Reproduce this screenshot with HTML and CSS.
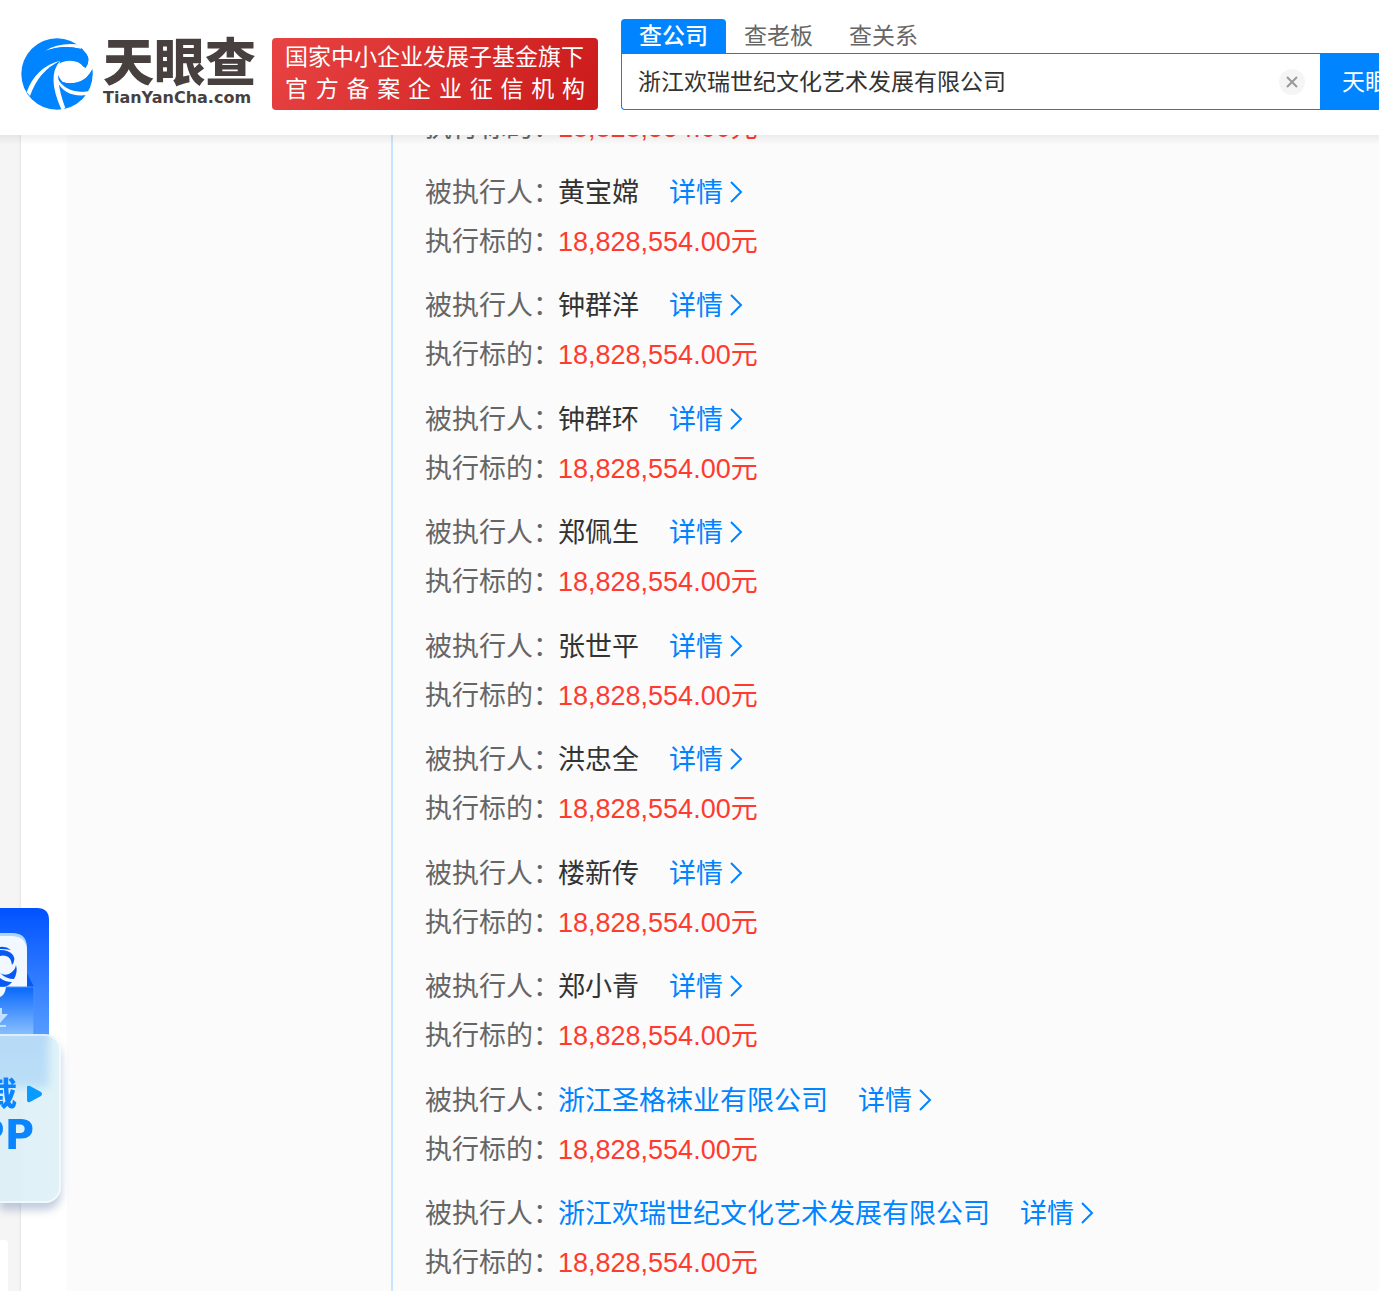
FILE: index.html
```html
<!DOCTYPE html>
<html lang="zh-CN">
<head>
<meta charset="utf-8">
<title>浙江欢瑞世纪文化艺术发展有限公司 - 天眼查</title>
<link rel="stylesheet" href="styles.css">
</head>
<body>
<header class="header">
  <a class="logo" href="#" aria-label="天眼查">
    <svg class="logo-mark" viewBox="9 14 216 216" aria-hidden="true">
      <circle cx="117" cy="122" r="107" fill="#0084ff"/>
      <g fill="#fff">
        <path d="M81 53Q120 28 176 33L196 40L188 46Q135 34 81 53Z"/>
        <path d="M176 32Q206 48 211 72Q214 90 203 104L196 100Q184 82 156 82Q134 82 121 93L117 112Q118 128 134 146Q160 154 188 144Q210 134 223 108L240 100L232 60L200 30Z"/>
        <path d="M127 82Q62 112 36 188L26 176Q54 100 127 82Z"/>
        <path d="M127 82Q108 132 142 224L131 230Q84 128 127 82Z"/>
        <path d="M119 136Q146 182 213 174L208 185Q142 194 116 142Z"/>
      </g>
      <path d="M81 53Q134 34 184 46Q208 56 210 78Q210 92 202 102Q200 86 180 73Q150 62 118 74Q82 90 50 130L24 120L40 70Q60 52 81 53Z" fill="#0084ff"/>
      <path d="M131 146Q164 154 188 144Q210 134 223 108Q225 144 207 173Q156 180 131 146Z" fill="#0084ff"/>
    </svg>
    <span class="logo-text">
      <span class="logo-name">天眼查</span>
      <span class="logo-domain">TianYanCha.com</span>
    </span>
  </a>
  <div class="banner">
    <span>国家中小企业发展子基金旗下</span>
    <span class="banner-spread">官方备案企业征信机构</span>
  </div>
  <form class="search">
    <nav class="tabs">
      <a class="tab tab-active" href="#">查公司</a>
      <a class="tab" href="#">查老板</a>
      <a class="tab" href="#">查关系</a>
    </nav>
    <div class="search-row">
      <div class="search-box">
        <input class="search-input" type="text" aria-label="公司名称" value="浙江欢瑞世纪文化艺术发展有限公司">
        <button class="clear" type="button" aria-label="清空">
          <svg viewBox="0 0 12 12" aria-hidden="true"><path d="M1 1L11 11M11 1L1 11"/></svg>
        </button>
      </div>
      <button class="submit" type="button">天眼一下</button>
    </div>
  </form>
</header>

<main class="page">
  <div class="panel">
    <div class="side"></div>
    <div class="records">
      <dl class="entry"><div class="row"><dt>执行标的：</dt><dd class="amount">18,828,554.00元</dd></div></dl>
      <dl class="entry"><div class="row"><dt>被执行人：</dt><dd>黄宝嫦</dd><dd class="more"><a href="#">详情<svg viewBox="0 0 14 24" aria-hidden="true"><path d="M2 2L12 12L2 22"/></svg></a></dd></div><div class="row"><dt>执行标的：</dt><dd class="amount">18,828,554.00元</dd></div></dl>
      <dl class="entry"><div class="row"><dt>被执行人：</dt><dd>钟群洋</dd><dd class="more"><a href="#">详情<svg viewBox="0 0 14 24" aria-hidden="true"><path d="M2 2L12 12L2 22"/></svg></a></dd></div><div class="row"><dt>执行标的：</dt><dd class="amount">18,828,554.00元</dd></div></dl>
      <dl class="entry"><div class="row"><dt>被执行人：</dt><dd>钟群环</dd><dd class="more"><a href="#">详情<svg viewBox="0 0 14 24" aria-hidden="true"><path d="M2 2L12 12L2 22"/></svg></a></dd></div><div class="row"><dt>执行标的：</dt><dd class="amount">18,828,554.00元</dd></div></dl>
      <dl class="entry"><div class="row"><dt>被执行人：</dt><dd>郑佩生</dd><dd class="more"><a href="#">详情<svg viewBox="0 0 14 24" aria-hidden="true"><path d="M2 2L12 12L2 22"/></svg></a></dd></div><div class="row"><dt>执行标的：</dt><dd class="amount">18,828,554.00元</dd></div></dl>
      <dl class="entry"><div class="row"><dt>被执行人：</dt><dd>张世平</dd><dd class="more"><a href="#">详情<svg viewBox="0 0 14 24" aria-hidden="true"><path d="M2 2L12 12L2 22"/></svg></a></dd></div><div class="row"><dt>执行标的：</dt><dd class="amount">18,828,554.00元</dd></div></dl>
      <dl class="entry"><div class="row"><dt>被执行人：</dt><dd>洪忠全</dd><dd class="more"><a href="#">详情<svg viewBox="0 0 14 24" aria-hidden="true"><path d="M2 2L12 12L2 22"/></svg></a></dd></div><div class="row"><dt>执行标的：</dt><dd class="amount">18,828,554.00元</dd></div></dl>
      <dl class="entry"><div class="row"><dt>被执行人：</dt><dd>楼新传</dd><dd class="more"><a href="#">详情<svg viewBox="0 0 14 24" aria-hidden="true"><path d="M2 2L12 12L2 22"/></svg></a></dd></div><div class="row"><dt>执行标的：</dt><dd class="amount">18,828,554.00元</dd></div></dl>
      <dl class="entry"><div class="row"><dt>被执行人：</dt><dd>郑小青</dd><dd class="more"><a href="#">详情<svg viewBox="0 0 14 24" aria-hidden="true"><path d="M2 2L12 12L2 22"/></svg></a></dd></div><div class="row"><dt>执行标的：</dt><dd class="amount">18,828,554.00元</dd></div></dl>
      <dl class="entry"><div class="row"><dt>被执行人：</dt><dd><a href="#">浙江圣格袜业有限公司</a></dd><dd class="more"><a href="#">详情<svg viewBox="0 0 14 24" aria-hidden="true"><path d="M2 2L12 12L2 22"/></svg></a></dd></div><div class="row"><dt>执行标的：</dt><dd class="amount">18,828,554.00元</dd></div></dl>
      <dl class="entry"><div class="row"><dt>被执行人：</dt><dd><a href="#">浙江欢瑞世纪文化艺术发展有限公司</a></dd><dd class="more"><a href="#">详情<svg viewBox="0 0 14 24" aria-hidden="true"><path d="M2 2L12 12L2 22"/></svg></a></dd></div><div class="row"><dt>执行标的：</dt><dd class="amount">18,828,554.00元</dd></div></dl>
    </div>
  </div>
</main>

<aside class="float">
  <a class="app" href="#">
    <svg class="app-art" viewBox="0 0 49 180" aria-hidden="true">
      <defs>
        <linearGradient id="card" x1="0" y1="0" x2="0" y2="1"><stop offset="0" stop-color="#0052ff"/><stop offset="0.700" stop-color="#559cff"/><stop offset="1" stop-color="#70b4ff"/></linearGradient>
        <linearGradient id="box" x1="0" y1="0" x2="0" y2="1"><stop offset="0" stop-color="#0868fb"/><stop offset="1" stop-color="#8dc2ff"/></linearGradient>
      </defs>
      <path d="M0 0H37Q49 0 49 12V180H0Z" fill="url(#card)"/>
      <path d="M27 65L34 79V80H27Z" fill="#0759ee"/>
      <path d="M0 25H12Q27 25 27 40V79H0Z" fill="#a9d7ff"/>
      <path d="M0 28H12Q27 29 27 43V79H0Z" fill="#f1f8ff"/>
      <path d="M0 39Q6 38 11 42Q5 41 0 41Z" fill="#0759f6"/>
      <path d="M0 42Q9 42 13 47Q16 52 12 57Q11 49 6 48Q3 47 0 48Z" fill="#0759f6"/>
      <path d="M0 65Q4 68 9 66Q15 63 16 57Q18 64 14 71Q6 71 0 65Z" fill="#0759f6"/>
      <path d="M0 70Q5 74 12 74Q9 78 4 79H0Z" fill="#0759f6"/>
      <path d="M0 79H34V128H0Z" fill="url(#box)"/>
      <path d="M0 79H34V128" fill="none" stroke="#4a91ff"/>
      <path d="M0 79H6Q5 87 0 89Z" fill="#f1f8ff"/>
      <path d="M0 100H2V106H8L0 115ZM0 117H6V119H0Z" fill="#c4e0ff"/>
    </svg>
    <span class="app-label">
      <span class="app-line">下载<svg class="play" viewBox="0 0 16 18" aria-hidden="true"><path d="M0 2Q0 0 3 1L14 7Q16 9 14 11L3 17Q0 18 0 15Z"/></svg></span>
      <span class="app-name">APP</span>
    </span>
  </a>
  <div class="tools"></div>
</aside>
</body>
</html>
```
FILE: styles.css
```css
* { box-sizing: border-box; }

body {
  margin: 0;
  overflow-x: hidden;
  background: #f5f5f5;
  color: #333;
  font-family: "Liberation Sans", "Noto Sans CJK SC", sans-serif;
}

a { color: #0084ff; text-decoration: none; }
button, input { font: inherit; border: 0; padding: 0; }

/* Header */
.header {
  position: fixed;
  z-index: 2;
  top: 0;
  left: 0;
  right: 0;
  display: flex;
  align-items: flex-end;
  height: 135px;
  padding: 0 0 25px 21px;
  overflow: hidden;
  background: #fff;
}
.page::before {
  content: "";
  position: fixed;
  z-index: 1;
  top: 135px;
  left: 0;
  right: 0;
  height: 10px;
  background: linear-gradient(rgba(0, 0, 0, 0.06), rgba(0, 0, 0, 0));
}

.logo { display: flex; align-items: center; gap: 10px; width: 235px; height: 72px; }
.logo-mark { flex: none; width: 72px; height: 72px; }
.logo-text { display: flex; flex-direction: column; padding-bottom: 4px; color: #483f3f; }
.logo-name { font-size: 51px; font-weight: 900; line-height: 52px; }
.logo-domain { font: bold 16px/16px "DejaVu Sans", sans-serif; }

.banner {
  flex: none;
  width: 326px;
  height: 72px;
  margin: 0 23px 0 16px;
  padding: 3px 13px;
  border-radius: 4px;
  background: linear-gradient(120deg, #e84343, #cb1a1a);
  color: #fff;
  font-size: 23px;
  line-height: 32px;
  white-space: nowrap;
}
.banner span { display: block; }
.banner-spread { text-align: justify; text-align-last: justify; }

.search { flex: 1; margin-right: -77px; }
.tabs { display: flex; }
.tab {
  padding: 0 18px;
  color: #666;
  font-size: 23px;
  line-height: 34px;
}
.tab-active {
  border-radius: 4px 4px 0 0;
  background: #0084ff;
  color: #fff;
  font-weight: 500;
}
.search-row { display: flex; height: 57px; }
.search-box {
  flex: 1;
  display: flex;
  align-items: center;
  padding: 0 15px 0 16px;
  border: 1px solid #0084ff;
  border-right: 0;
  border-radius: 0 0 0 4px;
}
.search-input {
  flex: 1;
  min-width: 0;
  height: 54px;
  padding-bottom: 3px;
  background: none;
  color: #333;
  font-size: 23px;
  outline: 0;
}
.clear {
  display: grid;
  place-items: center;
  width: 26px;
  height: 26px;
  border-radius: 50%;
  background: #f5f5f5;
}
.clear svg { width: 12px; height: 12px; stroke: #999; stroke-width: 2; }
.submit {
  width: 136px;
  padding-bottom: 3px;
  background: #0084ff;
  color: #fff;
  font-size: 23px;
}

/* Records */
.page { min-height: 100vh; padding-left: 21px; }
.panel {
  display: flex;
  min-height: 100vh;
  padding-left: 46px;
  background: #fff;
  box-shadow: 0 0 3px rgba(0, 0, 0, 0.12);
}
.side { flex: none; width: 324px; background: #fbfbfb; }
.records {
  flex: 1;
  display: flex;
  flex-direction: column;
  gap: 15px;
  padding: 104px 0 0 32px;
  border-left: 2px solid #c9e4ff;
  background: #fbfbfb;
}
.entry { margin: 0; }
.entry:nth-child(even) { padding-top: 1px; }
.row {
  display: flex;
  font-size: 27px;
  line-height: 49px;
  white-space: nowrap;
}
.row dt { width: 133px; color: #666; }
.row dd { margin: 0; }
.row .amount { color: #ff3b30; }
.row .more { margin-left: 30px; }
.more a { display: flex; align-items: center; gap: 6px; }
.more svg {
  width: 14px;
  height: 24px;
  margin-bottom: 4px;
  fill: none;
  stroke: #0084ff;
  stroke-width: 2;
}

/* Floating shortcuts */
.float { position: fixed; z-index: 1; left: 0; top: 908px; width: 61px; }
.app { display: block; position: relative; height: 295px; }
.app-art { display: block; width: 49px; height: 180px; }
.app-label {
  position: absolute;
  left: 0;
  right: 0;
  top: 126px;
  bottom: 0;
  display: flex;
  flex-direction: column;
  align-items: flex-end;
  padding-top: 38px;
  border: 2px solid rgba(255, 255, 255, 0.5);
  border-left: 0;
  border-radius: 0 16px 16px 0;
  background: rgba(214, 238, 244, 0.75);
  backdrop-filter: blur(4px);
  box-shadow: 0 7px 8px rgba(80, 110, 160, 0.35);
  color: #0a84ff;
  overflow: hidden;
}
.app-line {
  display: flex;
  align-items: center;
  gap: 10px;
  padding-right: 16px;
  font-size: 32px;
  font-weight: 900;
  line-height: 40px;
  white-space: nowrap;
}
.play { flex: none; width: 16px; height: 18px; fill: #0a9bff; }
.app-name {
  padding-right: 25px;
  font: bold 40px/42px "DejaVu Sans", sans-serif;
}
.tools {
  width: 8px;
  height: 80px;
  margin-top: 37px;
  border-radius: 0 4px 0 0;
  background: #fff;
}
```
